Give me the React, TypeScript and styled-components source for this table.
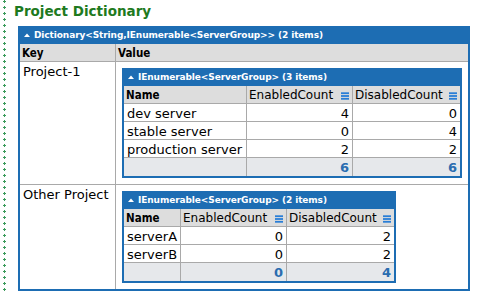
import React from "react";
import styled, { createGlobalStyle } from "styled-components";

const BLUE = "#1d6db3";
const LINE = "#a9a9a9";
const HEAD_BG = "#dddddd";
const TOTAL_BG = "#e6e8eb";
const TOTAL_FG = "#2a6db0";
const RAIL = "#3a9a5a";
const ICON = "#2a7ed6";

const GlobalStyle = createGlobalStyle`
  html, body { margin: 0; padding: 0; background: #fff; }
  body { font-family: "DejaVu Sans", Verdana, sans-serif; color: #000; }
`;

const Page = styled.div`
  display: flex;
  align-items: stretch;
`;

const Rail = styled.div`
  width: 3px;
  margin-left: 3px;
  flex: none;
  background-image:
    repeating-linear-gradient(to bottom, ${RAIL} 0 3px, transparent 3px 6px),
    repeating-linear-gradient(to bottom, transparent 0 1px, ${RAIL} 1px 2px, transparent 2px 6px);
  background-size: 1px 100%, 3px 100%;
  background-position: 1px 0, 0 0;
  background-repeat: no-repeat;
`;

const Content = styled.div`
  padding: 4px 0 3px 8px;
`;

const Title = styled.h1`
  margin: 0 0 7px;
  font: bold 13.5px/15px "DejaVu Sans", Verdana, sans-serif;
  color: #1e7a1e;
`;

const Grid = styled.table<{ $w: number; $indent?: number }>`
  box-sizing: border-box;
  width: ${(p) => p.$w}px;
  margin-left: ${(p) => p.$indent ?? 0}px;
  table-layout: fixed;
  border-collapse: separate;
  border-spacing: 0;
  border: 2px solid ${BLUE};
`;

const Col = styled.col<{ $w: number }>`
  width: ${(p) => p.$w}px;
`;

const TypeBar = styled.th`
  background: ${BLUE};
  color: #fff;
  text-align: left;
  font: bold 9px/14px "DejaVu Sans", Verdana, sans-serif;
  letter-spacing: -0.1px;
  padding: 0 4px 2px;
  white-space: nowrap;
  overflow: hidden;
`;

const Arrow = styled.svg`
  width: 6px;
  height: 4px;
  margin-right: 4px;
  vertical-align: 1px;
`;

const HeadCell = styled.th<{ $end?: boolean; $bold?: boolean }>`
  background: ${HEAD_BG};
  text-align: left;
  padding: 2px 3px 0 2px;
  font-family: ${(p) =>
    p.$bold ? `"DejaVu Sans Condensed", "DejaVu Sans", sans-serif` : `"DejaVu Sans", Verdana, sans-serif`};
  font-stretch: ${(p) => (p.$bold ? "condensed" : "normal")};
  font-weight: ${(p) => (p.$bold ? "bold" : "normal")};
  font-size: ${(p) => (p.$bold ? "11.5px" : "12px")};
  line-height: 15px;
  border-right: ${(p) => (p.$end ? "none" : `1px solid ${LINE}`)};
  border-bottom: 1px solid ${LINE};
  white-space: nowrap;
  overflow: hidden;
`;

const HeadFlex = styled.span`
  display: flex;
  align-items: center;
  justify-content: space-between;
`;

const GraphIcon = styled.svg`
  width: 8px;
  height: 8px;
  flex: none;
`;

const KeyCell = styled.td<{ $last?: boolean }>`
  vertical-align: top;
  font: 13px/15px "DejaVu Sans", Verdana, sans-serif;
  padding: 2px 3px 0;
  border-right: 1px solid ${LINE};
  border-bottom: ${(p) => (p.$last ? "none" : `1px solid ${LINE}`)};
  white-space: nowrap;
`;

const ValueCell = styled.td<{ $last?: boolean }>`
  vertical-align: top;
  padding: 6px;
  border-bottom: ${(p) => (p.$last ? "none" : `1px solid ${LINE}`)};
`;

const DataCell = styled.td<{ $end?: boolean; $num?: boolean }>`
  font: 13px/15px "DejaVu Sans", Verdana, sans-serif;
  padding: 2px 3px 0;
  text-align: ${(p) => (p.$num ? "right" : "left")};
  border-right: ${(p) => (p.$end ? "none" : `1px solid ${LINE}`)};
  border-bottom: 1px solid ${LINE};
  white-space: nowrap;
  overflow: hidden;
`;

const TotalCell = styled.td<{ $end?: boolean }>`
  background: ${TOTAL_BG};
  color: ${TOTAL_FG};
  font: bold 13px/15px "DejaVu Sans", Verdana, sans-serif;
  padding: 2px 3px 1px;
  text-align: right;
  border-right: ${(p) => (p.$end ? "none" : `1px solid ${LINE}`)};
`;

type Server = { name: string; enabled: number; disabled: number };
type Project = { key: string; nameWidth: number; servers: Server[] };

const projects: Project[] = [
  {
    key: "Project-1",
    nameWidth: 123,
    servers: [
      { name: "dev server", enabled: 4, disabled: 0 },
      { name: "stable server", enabled: 0, disabled: 4 },
      { name: "production server", enabled: 2, disabled: 2 },
    ],
  },
  {
    key: "Other Project",
    nameWidth: 57,
    servers: [
      { name: "serverA", enabled: 0, disabled: 2 },
      { name: "serverB", enabled: 0, disabled: 2 },
    ],
  },
];

const UpArrow = () => (
  <Arrow viewBox="0 0 6 4">
    <polygon points="0,4 3,0.4 6,4" fill="#fff" />
  </Arrow>
);

const Graph = () => (
  <GraphIcon viewBox="0 0 8 8">
    <rect x="0" y="0.3" width="8" height="1.8" fill={ICON} />
    <rect x="0" y="3.1" width="8" height="1.8" fill={ICON} />
    <rect x="0" y="5.9" width="8" height="1.8" fill={ICON} />
  </GraphIcon>
);

const ServerTable = ({ p }: { p: Project }) => {
  const totalEnabled = p.servers.reduce((s, x) => s + x.enabled, 0);
  const totalDisabled = p.servers.reduce((s, x) => s + x.disabled, 0);
  return (
    <Grid $w={p.nameWidth + 106 + 107 + 4}>
      <colgroup>
        <Col $w={p.nameWidth} />
        <Col $w={106} />
        <Col $w={107} />
      </colgroup>
      <thead>
        <tr>
          <TypeBar colSpan={3}>
            <UpArrow />
            {`IEnumerable<ServerGroup> (${p.servers.length} items)`}
          </TypeBar>
        </tr>
        <tr>
          <HeadCell $bold>Name</HeadCell>
          <HeadCell>
            <HeadFlex>
              EnabledCount <Graph />
            </HeadFlex>
          </HeadCell>
          <HeadCell $end>
            <HeadFlex>
              DisabledCount <Graph />
            </HeadFlex>
          </HeadCell>
        </tr>
      </thead>
      <tbody>
        {p.servers.map((s) => (
          <tr key={s.name}>
            <DataCell>{s.name}</DataCell>
            <DataCell $num>{s.enabled}</DataCell>
            <DataCell $num $end>
              {s.disabled}
            </DataCell>
          </tr>
        ))}
        <tr>
          <TotalCell />
          <TotalCell>{totalEnabled}</TotalCell>
          <TotalCell $end>{totalDisabled}</TotalCell>
        </tr>
      </tbody>
    </Grid>
  );
};

export default function App() {
  return (
    <>
      <GlobalStyle />
      <Page>
        <Rail />
        <Content>
          <Title>Project Dictionary</Title>
          <Grid $w={452} $indent={4}>
            <colgroup>
              <Col $w={96} />
              <Col $w={352} />
            </colgroup>
            <thead>
              <tr>
                <TypeBar colSpan={2}>
                  <UpArrow />
                  {`Dictionary<String,IEnumerable<ServerGroup>> (${projects.length} items)`}
                </TypeBar>
              </tr>
              <tr>
                <HeadCell $bold>Key</HeadCell>
                <HeadCell $bold $end>
                  Value
                </HeadCell>
              </tr>
            </thead>
            <tbody>
              {projects.map((p, i) => (
                <tr key={p.key}>
                  <KeyCell $last={i === projects.length - 1}>{p.key}</KeyCell>
                  <ValueCell $last={i === projects.length - 1}>
                    <ServerTable p={p} />
                  </ValueCell>
                </tr>
              ))}
            </tbody>
          </Grid>
        </Content>
      </Page>
    </>
  );
}
